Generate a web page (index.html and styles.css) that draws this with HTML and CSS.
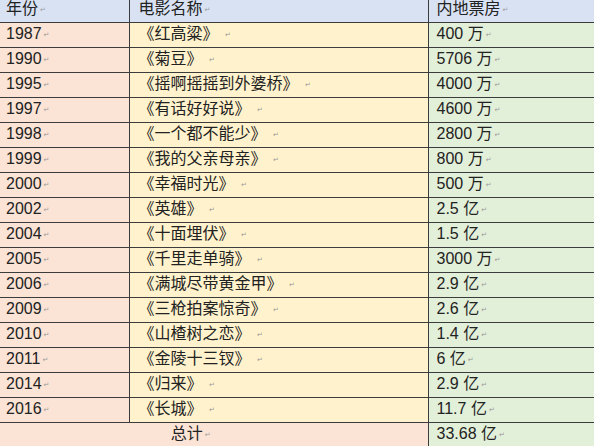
FILE: index.html
```html
<!DOCTYPE html>
<html lang="zh-CN">
<head>
<meta charset="utf-8">
<title>电影票房</title>
<link rel="stylesheet" href="styles.css">
</head>
<body>
<table class="films">
  <colgroup>
    <col class="c-year">
    <col class="c-name">
    <col class="c-box">
  </colgroup>
  <thead>
    <tr class="head">
      <td class="year">年份<span class="pm">↵</span></td>
      <td class="name">电影名称<span class="pm">↵</span></td>
      <td class="box">内地票房<span class="pm">↵</span></td>
    </tr>
  </thead>
  <tbody>
    <tr><td class="year">1987<span class="pm">↵</span></td><td class="name">《红高粱》 <span class="pm">↵</span></td><td class="box">400 万<span class="pm">↵</span></td></tr>
    <tr><td class="year">1990<span class="pm">↵</span></td><td class="name">《菊豆》 <span class="pm">↵</span></td><td class="box">5706 万<span class="pm">↵</span></td></tr>
    <tr><td class="year">1995<span class="pm">↵</span></td><td class="name">《摇啊摇摇到外婆桥》 <span class="pm">↵</span></td><td class="box">4000 万<span class="pm">↵</span></td></tr>
    <tr><td class="year">1997<span class="pm">↵</span></td><td class="name">《有话好好说》 <span class="pm">↵</span></td><td class="box">4600 万<span class="pm">↵</span></td></tr>
    <tr><td class="year">1998<span class="pm">↵</span></td><td class="name">《一个都不能少》 <span class="pm">↵</span></td><td class="box">2800 万<span class="pm">↵</span></td></tr>
    <tr><td class="year">1999<span class="pm">↵</span></td><td class="name">《我的父亲母亲》 <span class="pm">↵</span></td><td class="box">800 万<span class="pm">↵</span></td></tr>
    <tr><td class="year">2000<span class="pm">↵</span></td><td class="name">《幸福时光》 <span class="pm">↵</span></td><td class="box">500 万<span class="pm">↵</span></td></tr>
    <tr><td class="year">2002<span class="pm">↵</span></td><td class="name">《英雄》 <span class="pm">↵</span></td><td class="box">2.5 亿<span class="pm">↵</span></td></tr>
    <tr><td class="year">2004<span class="pm">↵</span></td><td class="name">《十面埋伏》 <span class="pm">↵</span></td><td class="box">1.5 亿<span class="pm">↵</span></td></tr>
    <tr><td class="year">2005<span class="pm">↵</span></td><td class="name">《千里走单骑》 <span class="pm">↵</span></td><td class="box">3000 万<span class="pm">↵</span></td></tr>
    <tr><td class="year">2006<span class="pm">↵</span></td><td class="name">《满城尽带黄金甲》 <span class="pm">↵</span></td><td class="box">2.9 亿<span class="pm">↵</span></td></tr>
    <tr><td class="year">2009<span class="pm">↵</span></td><td class="name">《三枪拍案惊奇》 <span class="pm">↵</span></td><td class="box">2.6 亿<span class="pm">↵</span></td></tr>
    <tr><td class="year">2010<span class="pm">↵</span></td><td class="name">《山楂树之恋》 <span class="pm">↵</span></td><td class="box">1.4 亿<span class="pm">↵</span></td></tr>
    <tr><td class="year">2011<span class="pm">↵</span></td><td class="name">《金陵十三钗》 <span class="pm">↵</span></td><td class="box">6 亿<span class="pm">↵</span></td></tr>
    <tr><td class="year">2014<span class="pm">↵</span></td><td class="name">《归来》 <span class="pm">↵</span></td><td class="box">2.9 亿<span class="pm">↵</span></td></tr>
    <tr><td class="year">2016<span class="pm">↵</span></td><td class="name">《长城》 <span class="pm">↵</span></td><td class="box">11.7 亿<span class="pm">↵</span></td></tr>
  </tbody>
  <tfoot>
    <tr>
      <td class="total" colspan="2">总计<span class="pm">↵</span></td>
      <td class="box">33.68 亿<span class="pm">↵</span></td>
    </tr>
  </tfoot>
</table>
</body>
</html>
```

FILE: styles.css
```css
html, body {
  margin: 0;
  padding: 0;
  overflow: hidden;
  background: #ffffff;
}

.films {
  border-collapse: collapse;
  table-layout: fixed;
  width: 620px;
  margin-top: -3px;
  font-family: "Liberation Sans", "Noto Sans CJK SC", sans-serif;
  font-size: 16px;
  color: #222222;
}

.c-year { width: 129px; }
.c-name { width: 299px; }
.c-box { width: 192px; }

.films tr {
  height: 25px;
}

.films td {
  border: 1px solid #3c3c3c;
  padding: 0;
  line-height: 22px;
  vertical-align: middle;
  white-space: nowrap;
  overflow: hidden;
}

.films td.year {
  background: #fbe4d5;
  padding-left: 6px;
}

.films td.name {
  background: #fff2cc;
  padding-left: 9px;
}

.films td.box {
  background: #e2efd9;
  padding-left: 8px;
}

.films tr.head td {
  background: #d9e2f3;
}

.films td.total {
  background: #fbe4d5;
  text-align: center;
  padding-right: 46px;
}

.films tr:first-child td,
.films thead tr td {
  border-top: none;
}

.films td:first-child {
  border-left: none;
}

.pm {
  font-family: "DejaVu Sans", sans-serif;
  font-size: 7px;
  color: #9a9a9a;
  margin-left: 2px;
  vertical-align: 2px;
}
```
